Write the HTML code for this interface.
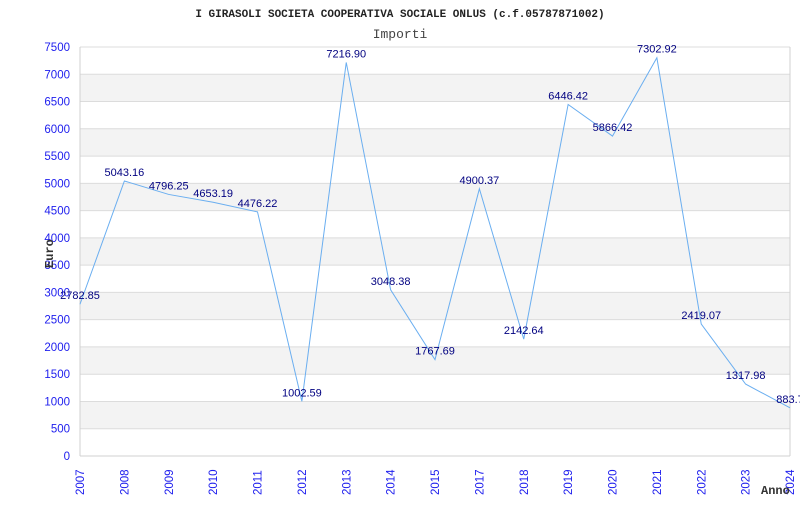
<!DOCTYPE html>
<html><head><meta charset="utf-8"><style>
body{margin:0;background:#fff;width:800px;height:500px;overflow:hidden}
svg text{font-family:"Liberation Sans",sans-serif}
</style></head><body>
<svg width="800" height="500" xmlns="http://www.w3.org/2000/svg">
<text x="400" y="17" text-anchor="middle" style="font-family:'Liberation Mono',monospace;font-weight:bold;font-size:11px" fill="#222">I GIRASOLI SOCIETA COOPERATIVA SOCIALE ONLUS (c.f.05787871002)</text>
<text x="400" y="38" text-anchor="middle" style="font-family:'Liberation Mono',monospace;font-size:13px" fill="#444">Importi</text>
</svg>
<script>
const s=document.querySelector('svg');
const ns='http://www.w3.org/2000/svg';
function el(t,a,txt){const e=document.createElementNS(ns,t);for(const k in a)e.setAttribute(k,a[k]);if(txt!=null)e.textContent=txt;s.appendChild(e);return e;}
const L=80,R=790,T=47,B=456,k=(B-T)/7500;
for(let v=0;v<7500;v+=500){const y1=B-(v+500)*k,y0=B-v*k;
 if((v/500)%2==1)el('rect',{x:L,y:y1,width:R-L,height:y0-y1,fill:'#f3f3f3'});
}
for(let v=0;v<=7500;v+=500){const y=B-v*k;
 el('line',{x1:L,x2:R,y1:y,y2:y,stroke:'#dcdcdc','stroke-width':1});
 el('text',{x:70,y:y+4,'text-anchor':'end','font-size':'11.5',fill:'#2020ee'},String(v));
}
el('line',{x1:L,x2:L,y1:T,y2:B,stroke:'#d0d0d0'});
el('line',{x1:R,x2:R,y1:T,y2:B,stroke:'#d0d0d0'});
el('line',{x1:L,x2:R,y1:B,y2:B,stroke:'#d0d0d0'});
const yrs=[2007,2008,2009,2010,2011,2012,2013,2014,2015,2017,2018,2019,2020,2021,2022,2023,2024];
const vals=[2782.85,5043.16,4796.25,4653.19,4476.22,1002.59,7216.90,3048.38,1767.69,4900.37,2142.64,6446.42,5866.42,7302.92,2419.07,1317.98,883.7];
const dx=(R-L)/16;let pts=[];
yrs.forEach((yr,i)=>{const x=L+i*dx;
 el('text',{x:0,y:0,'font-size':'11.5',fill:'#2020ee',transform:`translate(${x+4},${495}) rotate(-90)`},String(yr));
 const y=B-vals[i]*k;pts.push(x+','+y);
});
el('polyline',{points:pts.join(' '),fill:'none',stroke:'#6aaef0','stroke-width':1});
yrs.forEach((yr,i)=>{const x=L+i*dx,y=B-vals[i]*k;
 el('text',{x:x,y:y-5,'text-anchor':'middle','font-size':'11',fill:'#000080'},vals[i]==883.7?'883.7':vals[i].toFixed(2));
});
el('text',{x:0,y:0,'font-size':'12','font-weight':'bold',fill:'#333',transform:'translate(53,268) rotate(-90)',style:"font-family:'Liberation Mono',monospace"},'Euro');
el('text',{x:761,y:494,'font-size':'12','font-weight':'bold',fill:'#333',style:"font-family:'Liberation Mono',monospace"},'Anno');
</script>
</body></html>
